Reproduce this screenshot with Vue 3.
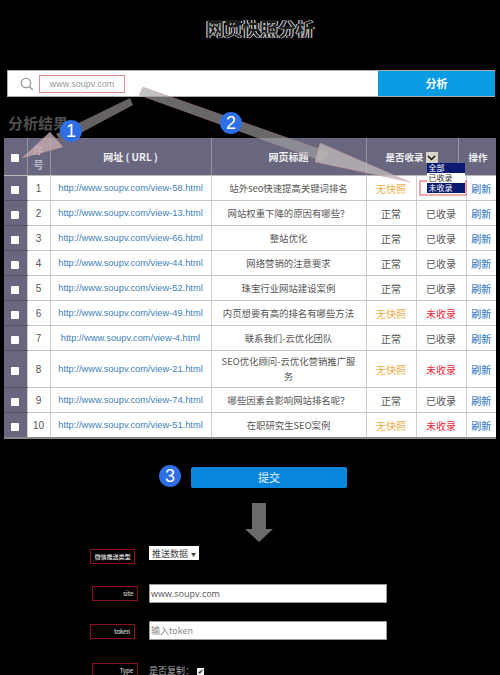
<script setup>
const rows = [
  { n: 1, id: 58, title: '站外seo快速提高关键词排名', s: 0, c: 2 },
  { n: 2, id: 13, title: '网站权重下降的原因有哪些？', s: 1, c: 1 },
  { n: 3, id: 66, title: '整站优化', s: 1, c: 1 },
  { n: 4, id: 44, title: '网络营销的注意要求', s: 1, c: 1 },
  { n: 5, id: 52, title: '珠宝行业网站建设案例', s: 1, c: 1 },
  { n: 6, id: 49, title: '内页想要有高的排名有哪些方法', s: 0, c: 0 },
  { n: 7, id: 4, title: '联系我们-云优化团队', s: 1, c: 1 },
  { n: 8, id: 21, title: 'SEO优化顾问-云优化营销推广服务', s: 0, c: 0, tall: true },
  { n: 9, id: 74, title: '哪些因素会影响网站排名呢？', s: 1, c: 1 },
  { n: 10, id: 51, title: '在职研究生SEO案例', s: 0, c: 0 }
]
</script>

<template>
  <div class="page">
    <h1 class="title">网页快照分析</h1>

    <div class="search">
      <div class="search-field">
        <svg class="lens" width="14" height="14" viewBox="0 0 14 14"><circle cx="6" cy="6" r="4.7" fill="none" stroke="#999" stroke-width="1.3"/><path d="M9.5 9.5 13 13" stroke="#999" stroke-width="1.5"/></svg>
        <span class="url-box">www.soupv.com</span>
      </div>
      <div class="search-btn">分析</div>
    </div>

    <h2 class="result">分析结果</h2>

    <table class="grid">
      <colgroup>
        <col class="c1" /><col class="c2" /><col class="c3" /><col class="c4" /><col class="c5" /><col class="c6" /><col class="c7" />
      </colgroup>
      <thead>
        <tr>
          <th><span class="cb"></span></th>
          <th class="seq">序号</th>
          <th>网址 ( URL )</th>
          <th>网页标题</th>
          <th colspan="2" class="inc">
            <span class="inc-label">是否收录</span>
            <span class="sel-arrow"><svg width="9" height="6" viewBox="0 0 9 6"><path d="M1 1l3.500 3.500L8 1" fill="none" stroke="#111" stroke-width="1.500"/></svg></span>
            <div class="drop">
              <div class="opt on">全部</div>
              <div class="opt">已收录</div>
              <div class="opt on">未收录</div>
            </div>
          </th>
          <th class="op">操作</th>
        </tr>
      </thead>
      <tbody>
        <tr v-for="r in rows" :key="r.n" :class="{ tall: r.tall }">
          <td class="side"><span class="cb"></span></td>
          <td class="num">{{ r.n }}</td>
          <td class="link">http://www.soupv.com/view-{{ r.id }}.html</td>
          <td class="page-title">{{ r.title }}</td>
          <td :class="r.s ? 'plain' : 'warn'">{{ r.s ? '正常' : '无快照' }}</td>
          <td :class="r.c === 0 ? 'bad' : 'plain'">{{ r.c === 2 ? '' : r.c ? '已收录' : '未收录' }}</td>
          <td class="refresh">刷新</td>
        </tr>
      </tbody>
    </table>

    <div class="submit-row">
      <span class="badge">3</span>
      <div class="submit">提交</div>
    </div>

    <svg class="down" width="28" height="40" viewBox="0 0 28 40"><path d="M7 0h14v26h7L14 39 0 26h7z" fill="#6a6a6a"/></svg>

    <div class="form">
      <div class="frow r1">
        <span class="lab">微信推送类型</span>
        <span class="select">推送数据<i>▼</i></span>
      </div>
      <div class="frow r2 shift">
        <span class="lab right">site</span>
        <span class="field">www.soupv.com</span>
      </div>
      <div class="frow r3">
        <span class="lab right">token</span>
        <span class="field ph">输入token</span>
      </div>
      <div class="frow r4 shift">
        <span class="lab right">Type</span>
        <span class="check-text">是否复制：<b class="tick">✔</b></span>
      </div>
    </div>

    <svg class="overlay" width="500" height="675" viewBox="0 0 500 675">
      <path d="M130 98 133 105 62 143 56 134z" fill="#6f6a6a" fill-opacity=".92"/>
      <path d="M50 132 63 147 22 158z" fill="#c4abae" fill-opacity=".8" stroke="#d88a94" stroke-opacity=".5" stroke-width=".5"/>
      <path d="M143 87 328 152 322 161 139 95z" fill="#a0a0a0" fill-opacity=".65" stroke="#e08a94" stroke-opacity=".45" stroke-width=".6"/>
      <path d="M320 143 410 182 315 162z" fill="#bdb8b8" fill-opacity=".8" stroke="#e08a94" stroke-opacity=".6" stroke-width=".6"/>
      <rect x="420" y="181" width="46" height="14" fill="none" stroke="#e8505b" stroke-width="1"/>
    </svg>
    <span class="badge float one">1</span>
    <span class="badge float two">2</span>
  </div>
</template>

<style>
html, body { margin: 0; background: #000; }
</style>

<style scoped>
.page { position: relative; width: 500px; height: 675px; overflow: hidden; background: #000; font-family: "Noto Sans CJK SC", "Liberation Sans", sans-serif; color: #555; box-sizing: border-box; padding-top: 16px; }
.title { margin: 0; padding-left: 20px; text-align: center; font-size: 18px; line-height: 24px; font-weight: 700; color: #1c1c1c; text-shadow: 0 0 1px #fff, 1px 0 0 #ccc, -1px 0 0 #ccc; }
.search { display: flex; margin: 30px 5px 0 7px; height: 27px; background: #fff; border: 1px solid #aaa; border-right: 0; box-sizing: border-box; }
.search-field { flex: 1; display: flex; align-items: center; padding-left: 12px; gap: 5px; }
.lens { flex: none; }
.url-box { box-sizing: border-box; width: 86px; height: 18px; border: 1px solid #e58a94; font: 9px/16px "Liberation Sans", sans-serif; color: #999; text-align: center; }
.search-btn { width: 117px; background: #0a9ce2; color: #fff; text-align: center; font-size: 11px; font-weight: 700; line-height: 25px; }
.result { margin: 15px 0 0 8px; font-size: 15px; line-height: 22px; font-weight: 700; color: #4e4e4e; }
.grid { margin: 4px 0 0 4px; width: 492px; border-collapse: collapse; table-layout: fixed; background: #fff; font-size: 10px; }
.c1 { width: 23px; } .c2 { width: 23px; } .c3 { width: 161px; } .c4 { width: 155px; } .c5 { width: 50px; } .c6 { width: 50px; } .c7 { width: 30px; }
th { height: 37px; padding: 0; background: #69677f; color: #f0f0f0; font-size: 10px; font-weight: 700; border-left: 1px solid #94939f; border-bottom: 1px solid #bbb; }
th:first-child { border-left: 0; }
th.op { border-left: 0; padding-right: 6px; font-size: 9.500px; overflow: visible; white-space: nowrap; }
.seq { color: #bcbac8; line-height: 15px; padding: 0 5px; }
.inc { position: relative; text-align: left; padding-left: 19px; }
.inc::after { content: ""; position: absolute; left: 91px; top: 0; bottom: 0; width: 1px; background: #94939f; }
.inc-label { vertical-align: middle; font-size: 9.500px; }
.sel-arrow { display: inline-flex; align-items: center; justify-content: center; width: 12px; height: 11px; margin-left: 2px; background: #d8d4c8; vertical-align: middle; }
.drop { position: absolute; left: 60px; top: 25px; width: 38px; background: #fff; font: 8px/8px "Noto Sans CJK SC", sans-serif; color: #333; text-align: left; z-index: 1; }
.opt { height: 10px; padding-left: 2px; line-height: 10px; font-weight: 400; }
.opt.on { background: #0a1a72; color: #fff; }
td { height: 24px; padding: 0; text-align: center; border-left: 1px solid #cfced6; border-bottom: 1px solid #c6c5cd; color: #555; }
tr.tall td { height: 36px; }
.side { background: #69677f; border-left: 0; border-bottom-color: #54536a; }
.num { color: #555; font-size: 10px; font-family: "Liberation Sans", sans-serif; }
.link { color: #3f7fbd; font: 9.300px "Liberation Sans", sans-serif; }
.page-title { font-size: 9.400px; line-height: 15px; padding: 0 6px; }
.warn { color: #eaae45; }
.bad { color: #ee2a42; }
.refresh { color: #4585c8; font-weight: 500; }
tbody tr:last-child td { border-bottom: 2px solid #8a8a8a; }
.cb { display: inline-block; width: 8px; height: 8px; background: #fff; border-radius: 1px; vertical-align: middle; }
.submit-row { position: relative; margin: 28px 0 0 191px; }
.submit { width: 156px; height: 21px; background: #0a85dc; color: #e8f6ff; border-radius: 2px; text-align: center; font-size: 11px; line-height: 21px; }
.badge { display: flex; align-items: center; justify-content: center; width: 22px; height: 22px; border-radius: 50%; background: #2f6fe6; color: #fff; font: 18px/22px "Liberation Sans", sans-serif; }
.submit-row .badge { position: absolute; left: -32px; top: -2px; }
.down { display: block; margin: 15px 0 0 245px; }
.form { display: flex; flex-direction: column; margin-top: 3px; }
.frow { display: flex; align-items: flex-start; gap: 14px; padding-left: 90px; }
.frow.shift { padding-left: 92px; gap: 11px; }
.r1 { height: 38px; } .r2 { height: 37px; } .r3 { height: 42px; } .r4 { height: 20px; }
.lab { box-sizing: border-box; flex: none; width: 45px; height: 15px; border: 1px solid #8c0f1c; color: #ddd; font-size: 6px; line-height: 13px; white-space: nowrap; overflow: hidden; text-align: center; text-shadow: .5px 0 .5px #999; }
.shift .lab { width: 46px; }
.r1 .lab { margin-top: 3px; }
.r2 .lab { margin-top: 2px; }
.r3 .lab { margin-top: 3px; }
.lab.right { text-align: right; padding-right: 4px; color: #bbb; }
.select { display: flex; align-items: center; justify-content: space-between; box-sizing: border-box; width: 50px; height: 14px; padding: 0 3px; background: #fff; color: #444; font-size: 9px; }
.select i { font-style: normal; font-size: 5px; }
.field { box-sizing: border-box; width: 238px; height: 19px; padding-left: 1px; background: #fff; border: 1px solid #999; font: 9px/17px "Open Sans", sans-serif; color: #555; }
.field.ph { color: #888; font-family: "Noto Sans CJK SC", sans-serif; }
.check-text { color: #aaa; font-size: 9px; line-height: 14px; margin-top: 1px; }
.tick { display: inline-block; width: 7px; height: 7px; margin-left: 3px; background: #eee; color: #222; font-size: 6px; line-height: 7px; text-align: center; vertical-align: middle; }
.overlay { position: absolute; left: 0; top: 0; pointer-events: none; }
.float { position: absolute; }
.one { left: 60px; top: 120px; }
.two { left: 220px; top: 112px; }
</style>
